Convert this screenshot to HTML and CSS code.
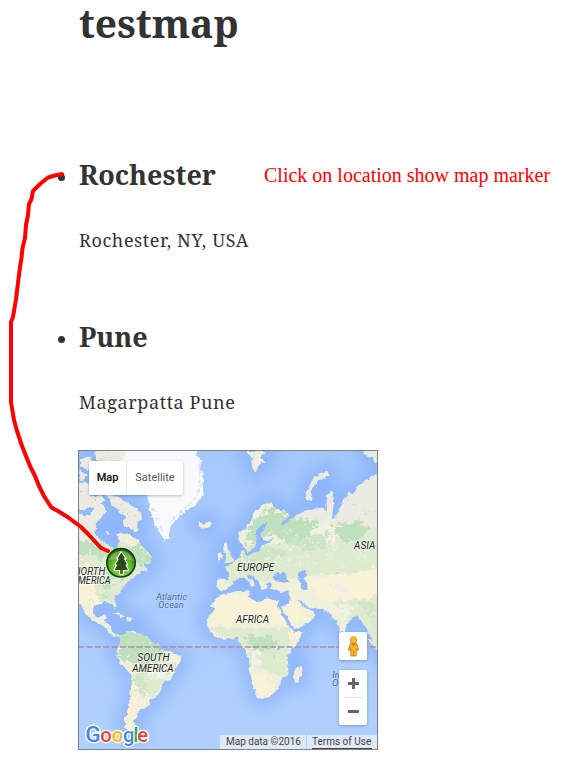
FILE: index.html
```html
<!DOCTYPE html>
<html lang="en">
<head>
<meta charset="utf-8">
<title>testmap</title>
<link rel="stylesheet" href="styles.css">
</head>
<body>
<main class="page">
  <h1 class="title"><span>testmap</span></h1>
  <ul class="locations">
    <li class="location">
      <div class="heading"><h2 class="rochester">Rochester</h2><span class="note">Click on location show map marker</span></div>
      <p class="address-ny">Rochester, NY, USA</p>
    </li>
    <li class="location">
      <div class="heading"><h2 class="pune">Pune</h2></div>
      <p class="address-pune">Magarpatta Pune</p>
    </li>
  </ul>
  <section class="map">
    <svg class="tiles" viewBox="27 18 894 894">
      <defs>
        <linearGradient id="sea" x1="0" y1="0" x2="0" y2="1"><stop offset="0" stop-color="#a5c8fd"/><stop offset="1" stop-color="#b1d0ff"/></linearGradient>
        <filter id="rough" x="-5%" y="-5%" width="110%" height="110%"><feTurbulence type="fractalNoise" baseFrequency=".07" numOctaves="2" seed="4"/><feDisplacementMap in="SourceGraphic" scale="13" xChannelSelector="R" yChannelSelector="G"/></filter>
        <filter id="patchy" x="-10%" y="-10%" width="120%" height="120%"><feTurbulence type="fractalNoise" baseFrequency=".06" numOctaves="3" seed="8"/><feDisplacementMap in="SourceGraphic" scale="60" xChannelSelector="R" yChannelSelector="G"/></filter>
        <filter id="soft"><feGaussianBlur stdDeviation="22"/></filter>
        <path id="land" d="M0 190L45 215 60 210 75 180 95 175 108 195 95 215 80 235 75 258 85 280 105 292 125 305 135 318 143 310 147 290 140 270 152 262 170 265 185 275 200 280 212 300 228 315 245 335 240 350 222 358 232 372 205 385 192 395 178 407 160 422 150 440 136 457 132 468 140 482 134 492 126 474 102 470 85 475 70 485 66 500 74 513 85 519 98 510 109 508 106 523 101 532 116 537 123 547 126 560 136 569 150 567 158 572 168 560 182 557 192 562 217 568 232 576 245 590 265 600 269 615 290 619 315 625 333 636 330 650 316 669 311 690 300 704 281 711 272 738 257 758 240 765 240 779 226 789 205 795 205 813 191 824 196 840 197 855 205 872 185 872 166 850 165 820 176 790 181 750 186 710 180 685 165 670 150 655 140 630 140 615 149 598 152 578 140 577 126 571 112 556 99 542 78 531 55 515 40 495 27 475 0 450Z
          M0 130L40 110 57 120 60 150 75 155 92 150 104 165 80 183 60 185 40 196 0 180Z M30 45L60 32 72 55 55 75 35 66Z M75 0L165 0 178 30 160 45 142 65 120 80 100 75 90 60 78 40Z M110 145L150 158 175 175 195 190 213 205 215 225 200 235 206 255 195 262 180 250 165 245 155 235 166 225 170 215 150 202 140 190 122 180Z M30 78L50 90 40 104 27 98Z M110 258L122 262 114 268Z
          M385 230L400 236 420 228 423 243 405 252 388 243Z M460 300L471 295 474 315 481 325 489 340 487 350 465 355 462 345 469 335 460 320Z M443 325L455 320 458 340 445 348Z
          M128 506L145 502 166 517 156 520 144 509Z M168 518L188 523 178 528 166 525Z
          M930 80L905 95 890 105 865 125 855 135 851 148 833 145 836 170 827 155 820 165 812 180 808 196 800 210 795 222 785 220 788 200 790 180 787 160 790 142 783 138 772 148 770 178 771 195 750 190 715 195 690 205 675 215 665 225 655 228 643 240 630 235 638 226 655 220 657 210 640 196 615 192 605 172 580 178 555 200 545 225 525 250 505 265 508 285 518 300 523 308 535 320 552 312 560 292 556 265 575 235 590 230 588 245 572 265 574 280 590 289 610 280 602 292 580 300 570 315 550 326 535 331 525 333 522 318 512 322 509 338 495 350 480 360 463 370 479 385 475 402 442 401 440 425 453 440 470 432 486 420 500 402 520 397 534 410 549 426 556 420 540 402 530 390 540 386 560 405 570 420 578 435 590 430 587 415 600 410 606 418 602 430 625 440 655 440 661 456 655 475 643 485 634 488 646 508 660 530 670 552 695 545 716 530 739 510 726 495 706 490 691 473 685 462 700 474 720 490 750 492 774 500 785 515 800 525 806 545 813 560 825 560 829 540 850 515 865 510 875 530 890 550 900 570 910 590 930 595Z
          M421 485L438 490 415 515 410 540 417 552 430 570 445 580 480 583 500 578 510 595 525 610 530 630 540 650 535 670 545 700 550 725 562 755 570 762 600 755 620 735 630 720 635 700 655 685 655 660 650 635 665 615 685 590 701 560 675 562 665 555 650 535 635 505 624 482 625 466 610 466 585 459 573 474 550 466 535 458 539 437 500 438 480 444 454 448 440 460Z
          M695 660L698 675 690 700 683 714 672 712 670 695 679 675Z M775 78L750 85 730 100 715 130 705 160 720 172 726 160 722 140 740 110 774 92Z M528 18L587 18 570 35 587 50 570 58 556 80 545 65 548 45Z M880 10L930 10 930 60 912 48 906 35 885 30Z M825 568L832 568 832 580 826 580Z M892 580L930 600 930 635 914 610Z"/>
        <clipPath id="landClip"><use href="#land"/></clipPath>
      </defs>
      <rect x="0" y="0" width="940" height="930" fill="url(#sea)"/>
      <g filter="url(#soft)"><use href="#land" fill="none" stroke="#75a3f5" stroke-width="48" opacity=".5"/></g>
      <g filter="url(#rough)">
        <use href="#land" fill="#f0efdb"/>
        <g clip-path="url(#landClip)">
          <path fill="#ebebe3" d="M0 0H250V270L140 260 70 290 0 260Z M640 0H940V240L790 235 680 230Z"/>
          <path fill="#deebce" d="M0 300L150 290 250 330 190 420 130 500 0 440Z M460 320L940 240 940 380 700 395 470 420Z M410 545L660 550 650 700 540 660 500 590Z M260 600L330 640 250 760 190 700Z M790 470L930 430V610H880Z"/>
          <g filter="url(#patchy)">
            <path fill="#bfe0bd" d="M0 280L80 295 140 325 220 300 240 350 160 360 70 330 0 320Z M110 375L165 380 125 420 100 460Z M530 285L535 250 590 190 640 210 740 230 720 280 650 290 600 260 540 310Z M790 240L880 225 890 260 870 300 800 280Z M140 555L250 570 290 620 220 665 145 640Z M530 575L610 575 620 610 540 620Z"/>
            <path fill="#f8f2d7" d="M0 350L60 360 80 440 110 520 60 490 0 450Z M440 445L660 460 720 510 660 540 420 540Z M680 410L940 370 940 450 780 470Z M270 600L330 630 320 670 285 640Z M185 690L210 740 180 860 160 860Z M540 690L600 690 600 750 560 750Z M650 560L700 555 660 620Z"/>
            <path fill="#f0f1e9" d="M510 260L570 185 605 175 560 225Z M740 235L790 230 790 295 745 300Z M240 655L290 665 270 710 230 680Z M790 415L820 415 830 450 805 455Z M805 480L850 485 820 520Z M525 610L570 620 570 660 540 650Z"/>
            <path fill="#cce5c5" d="M540 315L650 310 640 335 500 370Z M650 285L780 265 770 300 700 325Z M180 700L220 685 230 760Z M860 470L910 470 920 540Z"/>
          </g>
          <g fill="none" stroke="#f5f5ef" stroke-width="5" stroke-dasharray="5 9 2 15" filter="url(#patchy)"><path d="M500 350L920 330M570 310L900 290M640 260L920 350M560 370L900 350M30 330L230 330M40 370L170 385M530 650L640 650M190 680L300 650M780 495L910 490"/></g>
          <g fill="none" stroke="#c9cbc8" stroke-width="3" stroke-dasharray="5 9 2 7" filter="url(#patchy)"><path d="M510 280L550 215 600 180M780 420L820 440 840 450M860 190L915 200M100 50L140 30M30 145L85 160M140 180L205 225M160 285L215 320M720 150L730 110M35 410L90 510M185 690L180 840"/></g>
        </g>
        <path fill="#f8fafd" d="M178 0L385 0 378 35 397 45 390 70 401 82 398 120 401 150 385 165 380 180 350 195 325 215 310 235 300 255 295 280 285 285 270 265 258 245 250 220 240 195 235 165 225 140 210 110 190 80 165 60 152 50 166 30Z"/>
        <path fill="none" stroke="#dfe4e6" stroke-width="7" stroke-dasharray="12 5 3 8" d="M388 50L392 80 385 100 391 125 380 155 350 185 315 215 300 238M250 190L265 235 285 265"/>
        <path fill="#8fb7fa" d="M608 392L624 380 630 388 645 380 650 400 661 411 640 413 614 408Z M685 380L705 380 708 395 700 400 712 415 712 435 698 435 692 415 683 395Z M624 605L628 600 629 613 621 613Z M798 382L806 381 800 388Z M610 620L614 638 610 640Z M120 365L140 360 150 370 135 380Z M85 80L95 90 100 120 80 145 65 120Z M138 200L148 220 140 238Z"/>
      </g>
      <path d="M24 606H924" stroke="#ad8fa8" stroke-width="5" stroke-dasharray="19 6"/>
      <g class="labels">
        <g class="continents">
          <text x="24" y="389" textLength="82" lengthAdjust="spacingAndGlyphs">IORTH</text><text x="24" y="416" textLength="98" lengthAdjust="spacingAndGlyphs">MERICA</text>
          <text x="501" y="377" textLength="112" lengthAdjust="spacingAndGlyphs">EUROPE</text><text x="852" y="311" textLength="64" lengthAdjust="spacingAndGlyphs">ASIA</text>
          <text x="498" y="535" textLength="99" lengthAdjust="spacingAndGlyphs">AFRICA</text>
          <text x="202" y="649" textLength="97" lengthAdjust="spacingAndGlyphs">SOUTH</text><text x="187" y="680" textLength="124" lengthAdjust="spacingAndGlyphs">AMERICA</text>
        </g>
        <g class="oceans"><text x="258" y="464" textLength="93" lengthAdjust="spacingAndGlyphs">Atlantic</text><text x="265" y="490" textLength="76" lengthAdjust="spacingAndGlyphs">Ocean</text><text x="787" y="700">In</text><text x="786" y="724">O</text></g>
      </g>
      <text class="google" y="891"><tspan x="46" fill="#4285f4" font-size="68">G</tspan><tspan x="91" fill="#ea4335">o</tspan><tspan x="125" fill="#fbbc05">o</tspan><tspan x="159" fill="#4285f4">g</tspan><tspan x="190" fill="#34a853" font-size="62">l</tspan><tspan x="202" fill="#ea4335">e</tspan></text>
    </svg>
    <div class="map-types"><span class="active">Map</span><span class="satellite">Satellite</span></div>
    <div class="pegman"><svg viewBox="0 0 12 20"><path d="M3 7H9L11 13 9.5 14 8.7 12 8.5 19H3.5L3.3 12 2.5 14 1 13Z" fill="#fbb52c" stroke="#b98428" stroke-width=".8"/><path d="M6 13V19" stroke="#b98428" stroke-width=".8"/><path d="M3.8 7.5H8.2L6 10Z" fill="#e8811b"/><circle cx="6" cy="3.8" r="3.1" fill="#fdbd2c" stroke="#b98428" stroke-width=".7"/></svg></div>
    <div class="zoom"><svg viewBox="0 0 28 55"><path d="M9 13.5H20M14.5 8V19M9 41.5H20" stroke="#666" stroke-width="3" fill="none"/><path d="M5 27.5H24" stroke="#e6e6e6"/></svg></div>
    <div class="credits"><span class="copyright">Map data ©2016</span><span class="terms">Terms of Use</span></div>
  </section>
  <svg class="annotation" viewBox="0 0 567 778">
    <defs><radialGradient id="marker" cx=".5" cy=".7" r=".65"><stop offset="0" stop-color="#9af04e"/><stop offset=".55" stop-color="#5fba2a"/><stop offset="1" stop-color="#246b0d"/></radialGradient></defs>
    <circle cx="121" cy="562.8" r="14.2" fill="url(#marker)" stroke="#173e0c" stroke-width="1.6"/>
    <path d="M108.7 561A12.5 12.5 0 0 1 133.3 561Q121 557 108.7 561Z" fill="#d3f2ba" opacity=".35"/>
    <path d="M121.3 552.5L125.2 558.5H123.7L127 564.5H125.2L128 570H122.6V574H120.2V570H114.7L117.4 564.5H115.6L119 558.5H117.5Z" fill="#294c14" stroke="#fff" stroke-width="2.2" stroke-linejoin="round" paint-order="stroke"/>
    <path d="M120.2 570H122.6V573.7H120.2Z" fill="#8d4b20"/>
    <path d="M62 174L55 175.5 48 177.5 40 184 33 191 31.5 199 29 204 28 215 26 225 25 238 22.5 248 21.5 258 20 267 16 299 13 317 11 322V402L14 420 17 431 20 440 22 446 26 456 30 466 35 476 39 486 44 496 51 507 54 509 58 511 69 518 81 527 88 534 101 548 108 551" fill="none" stroke="#f00" stroke-width="4" stroke-linecap="round" stroke-linejoin="round"/>
  </svg>
</main>
</body>
</html>
```
FILE: styles.css
```css
body { margin: 0; background: #fff; color: #333; font-family: "Noto Serif", "Droid Serif", "DejaVu Serif Condensed", "DejaVu Serif", serif; }
.page { position: relative; box-sizing: border-box; width: 567px; height: 778px; padding-left: 78px; overflow: hidden; }
h1, h2, p, ul { margin: 0; padding: 0; }
.title { padding-left: 1px; font-size: 39px; line-height: 45px; height: 156px; box-sizing: border-box; white-space: nowrap; }
.locations { height: 294px; list-style: none; }
.location { height: 162px; }
.heading { position: relative; display: flex; height: 38px; align-items: flex-start; }
.heading::before { content: ""; position: absolute; left: -20px; top: 18px; width: 7px; height: 7px; border-radius: 50%; background: #333; }
h2 { padding-left: 1px; box-sizing: border-box; font-size: 27px; line-height: 38px; white-space: nowrap; }
.rochester { width: 186px; }
p { margin-top: 32px; padding-left: 1px; font-size: 18px; letter-spacing: .6px; line-height: 28px; white-space: nowrap; }
.note { padding-top: 7px; color: #f00; font: 20px/24px "Liberation Serif", serif; white-space: nowrap; }
.map { position: relative; box-sizing: border-box; width: 300px; height: 300px; border: 1px solid #808080; overflow: hidden; font-family: Roboto, sans-serif; }
.tiles { display: block; width: 298px; height: 298px; }
.labels text { font-family: Roboto, sans-serif; font-style: italic; paint-order: stroke; stroke-linejoin: round; stroke-width: 5px; }
.continents text { font-size: 33px; fill: #222; stroke: #ffffffb0; }
.oceans text { font-size: 29px; fill: #4b6f9f; stroke: #c1d9ff90; }
.google { font-family: Roboto, sans-serif; font-weight: 500; font-size: 61px; stroke: #fff; stroke-width: 8px; stroke-linejoin: round; paint-order: stroke; }
.map-types { position: absolute; left: 10px; top: 10px; display: flex; height: 34px; background: #fff; border-radius: 2px; box-shadow: 0 1px 3px #0004; font-size: 11px; line-height: 33px; text-align: center; }
.active { width: 37px; border-right: 1px solid #e6e6e6; color: #000; font-weight: 500; }
.satellite { width: 56px; color: #565656; }
.pegman, .zoom { position: absolute; right: 10px; width: 28px; background: #fff; border-radius: 2px; box-shadow: 0 1px 3px #0004; }
.pegman { top: 181px; height: 28px; display: grid; place-items: center; }
.pegman svg { width: 13px; height: 21px; }
.zoom { top: 219px; height: 55px; }
.zoom svg { display: block; width: 28px; height: 55px; }
.credits { position: absolute; right: 0; bottom: 0; display: flex; gap: 1px; height: 14px; font-size: 10px; line-height: 14px; color: #444; white-space: nowrap; }
.copyright, .terms { background: #e3ebf9e8; }
.copyright { width: 80px; padding-left: 6px; }
.terms { width: 60px; padding: 0 5px; background-image: linear-gradient(#444, #444); background-repeat: no-repeat; background-size: 60px 1px; background-position: 5px 13px; }
.annotation { position: absolute; left: 0; top: 0; width: 567px; height: 778px; pointer-events: none; }
```
